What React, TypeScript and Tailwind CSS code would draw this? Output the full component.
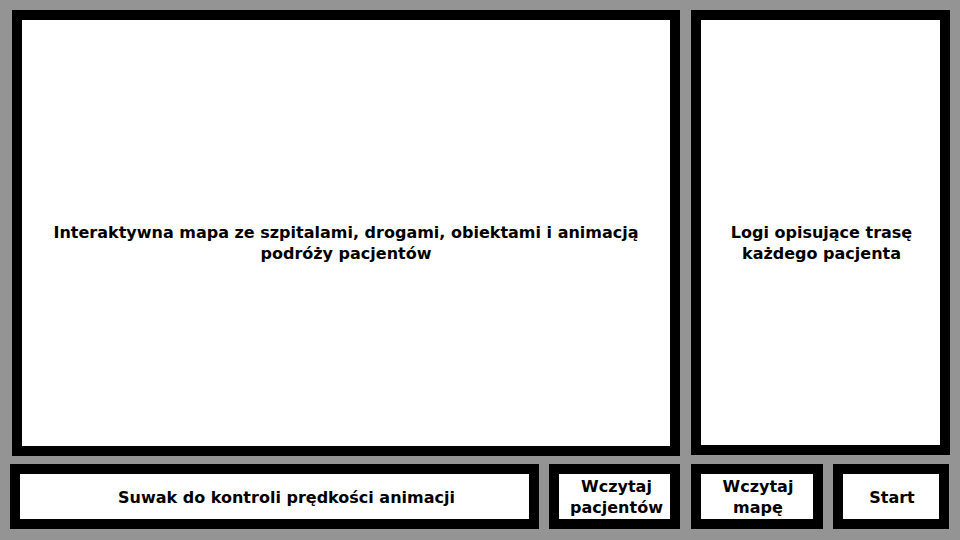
const Panel = ({
  className,
  children,
  inner = "",
}: {
  className: string;
  children: React.ReactNode;
  inner?: string;
}) => (
  <div className={`border-[10px] border-black bg-white flex items-center justify-center text-center ${className}`}>
    <div className={inner}>{children}</div>
  </div>
);

export default function App() {
  return (
    <div className="w-[960px] h-[540px] bg-[#949494] font-['DejaVu_Sans',sans-serif] font-bold text-[16px] leading-[21px] text-black overflow-hidden">
      {/* top: map + logs */}
      <div className="flex items-start pt-[10px] pl-[12px] gap-[11px]">
        <Panel className="w-[668px] h-[446px]" inner="pt-[20px]">
          Interaktywna mapa ze szpitalami, drogami, obiektami i animacją
          <br />
          podróży pacjentów
        </Panel>
        <Panel className="w-[259px] h-[445px]" inner="pt-[20px] pl-[2px]">
          Logi opisujące trasę
          <br />
          każdego pacjenta
        </Panel>
      </div>

      {/* bottom: controls */}
      <div className="flex mt-[8px] pl-[10px] h-[65px]">
        <Panel className="w-[529px] h-full" inner="pl-[24px] pt-[1px]">
          Suwak do kontroli prędkości animacji
        </Panel>
        <Panel className="w-[131px] h-full ml-[10px]" inner="pl-[4px]">
          Wczytaj
          <br />
          pacjentów
        </Panel>
        <Panel className="w-[132px] h-full ml-[11px]" inner="pl-[2px]">
          Wczytaj
          <br />
          mapę
        </Panel>
        <Panel className="w-[116px] h-full ml-[10px]" inner="pl-[2px] pt-[1px]">
          Start
        </Panel>
      </div>
    </div>
  );
}
